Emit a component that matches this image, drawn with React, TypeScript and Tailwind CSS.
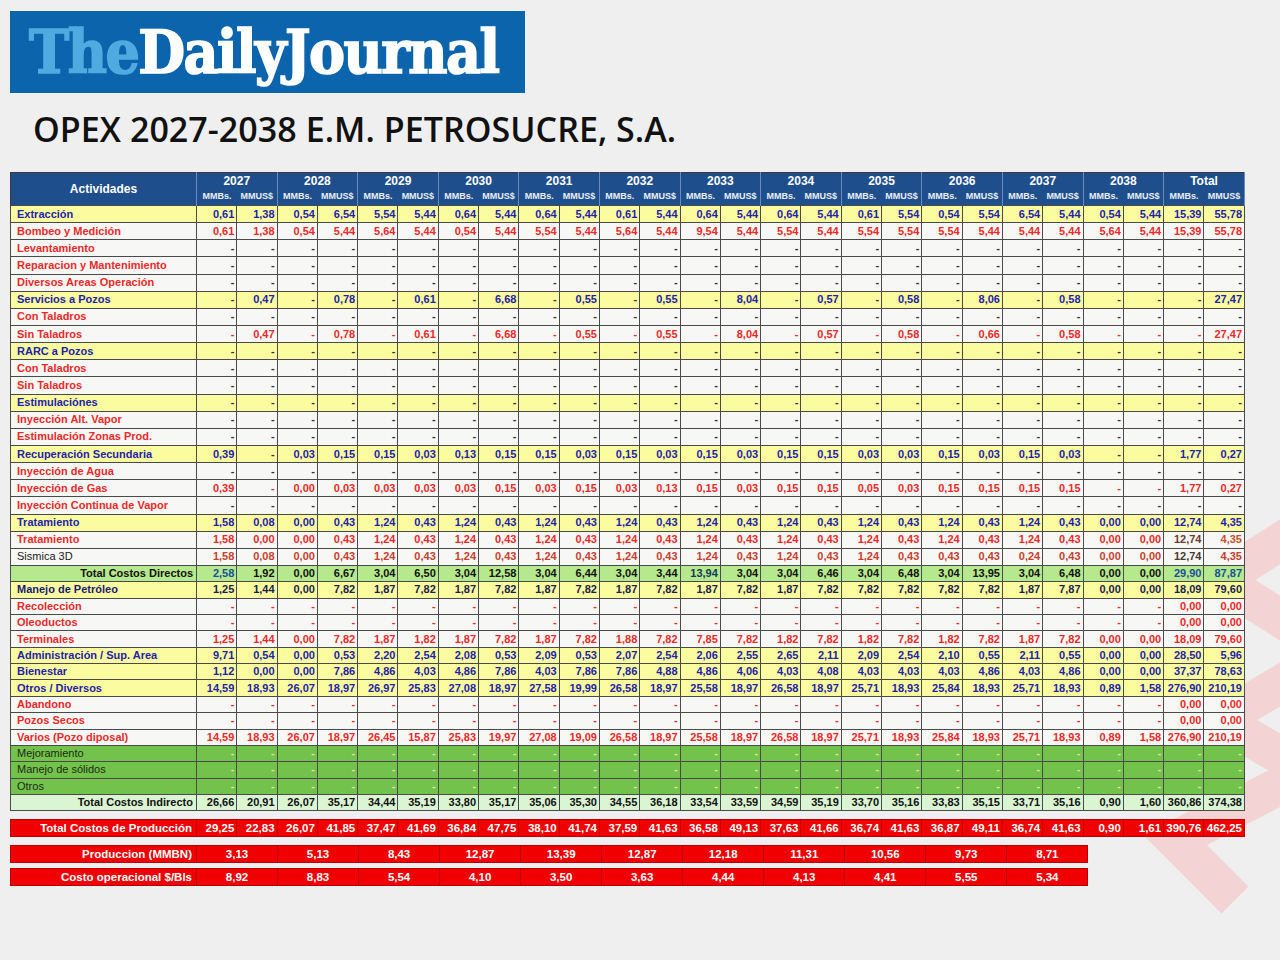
import React from 'react';

type Kind = 'blue' | 'red' | 'plain' | 'totalD' | 'navy' | 'green' | 'totalI';

interface Row {
  label: string;
  kind: Kind;
  values: string[];
}

const dash = (n: number) => Array(n).fill('-');
const v = (s: string) => s.split(' ');
const trat = Array(9).fill('1,24 0,43').join(' ');

const rows: Row[] = [
  { label: 'Extracción', kind: 'blue', values: v('0,61 1,38 0,54 6,54 5,54 5,44 0,64 5,44 0,64 5,44 0,61 5,44 0,64 5,44 0,64 5,44 0,61 5,54 0,54 5,54 6,54 5,44 0,54 5,44 15,39 55,78') },
  { label: 'Bombeo y Medición', kind: 'red', values: v('0,61 1,38 0,54 5,44 5,64 5,44 0,54 5,44 5,54 5,44 5,64 5,44 9,54 5,44 5,54 5,44 5,54 5,54 5,54 5,44 5,44 5,44 5,64 5,44 15,39 55,78') },
  { label: 'Levantamiento', kind: 'red', values: dash(26) },
  { label: 'Reparacion y Mantenimiento', kind: 'red', values: dash(26) },
  { label: 'Diversos Areas Operación', kind: 'red', values: dash(26) },
  { label: 'Servicios a Pozos', kind: 'blue', values: v('- 0,47 - 0,78 - 0,61 - 6,68 - 0,55 - 0,55 - 8,04 - 0,57 - 0,58 - 8,06 - 0,58 - - - 27,47') },
  { label: 'Con Taladros', kind: 'red', values: dash(26) },
  { label: 'Sin Taladros', kind: 'red', values: v('- 0,47 - 0,78 - 0,61 - 6,68 - 0,55 - 0,55 - 8,04 - 0,57 - 0,58 - 0,66 - 0,58 - - - 27,47') },
  { label: 'RARC a Pozos', kind: 'blue', values: dash(26) },
  { label: 'Con Taladros', kind: 'red', values: dash(26) },
  { label: 'Sin Taladros', kind: 'red', values: dash(26) },
  { label: 'Estimulaciónes', kind: 'blue', values: dash(26) },
  { label: 'Inyección Alt. Vapor', kind: 'red', values: dash(26) },
  { label: 'Estimulación Zonas Prod.', kind: 'red', values: dash(26) },
  { label: 'Recuperación Secundaria', kind: 'blue', values: v('0,39 - 0,03 0,15 0,15 0,03 0,13 0,15 0,15 0,03 0,15 0,03 0,15 0,03 0,15 0,15 0,03 0,03 0,15 0,03 0,15 0,03 - - 1,77 0,27') },
  { label: 'Inyección de Agua', kind: 'red', values: dash(26) },
  { label: 'Inyección de Gas', kind: 'red', values: v('0,39 - 0,00 0,03 0,03 0,03 0,03 0,15 0,03 0,15 0,03 0,13 0,15 0,03 0,15 0,15 0,05 0,03 0,15 0,15 0,15 0,15 - - 1,77 0,27') },
  { label: 'Inyección Continua de Vapor', kind: 'red', values: dash(26) },
  { label: 'Tratamiento', kind: 'blue', values: v(`1,58 0,08 0,00 0,43 ${trat} 0,00 0,00 12,74 4,35`) },
  { label: 'Tratamiento', kind: 'red', values: v(`1,58 0,00 0,00 0,43 ${trat} 0,00 0,00 12,74 4,35`) },
  { label: 'Sismica 3D', kind: 'plain', values: v('1,58 0,08 0,00 0,43 1,24 0,43 1,24 0,43 1,24 0,43 1,24 0,43 1,24 0,43 1,24 0,43 1,24 0,43 0,43 0,43 0,24 0,43 0,00 0,00 12,74 4,35') },
  { label: 'Total Costos Directos', kind: 'totalD', values: v('2,58 1,92 0,00 6,67 3,04 6,50 3,04 12,58 3,04 6,44 3,04 3,44 13,94 3,04 3,04 6,46 3,04 6,48 3,04 13,95 3,04 6,48 0,00 0,00 29,90 87,87') },
  { label: 'Manejo de Petróleo', kind: 'navy', values: v('1,25 1,44 0,00 7,82 1,87 7,82 1,87 7,82 1,87 7,82 1,87 7,82 1,87 7,82 1,87 7,82 7,82 7,82 7,82 7,82 1,87 7,87 0,00 0,00 18,09 79,60') },
  { label: 'Recolección', kind: 'red', values: [...dash(24), '0,00', '0,00'] },
  { label: 'Oleoductos', kind: 'red', values: [...dash(24), '0,00', '0,00'] },
  { label: 'Terminales', kind: 'red', values: v('1,25 1,44 0,00 7,82 1,87 1,82 1,87 7,82 1,87 7,82 1,88 7,82 7,85 7,82 1,82 7,82 1,82 7,82 1,82 7,82 1,87 7,82 0,00 0,00 18,09 79,60') },
  { label: 'Administración / Sup. Area', kind: 'blue', values: v('9,71 0,54 0,00 0,53 2,20 2,54 2,08 0,53 2,09 0,53 2,07 2,54 2,06 2,55 2,65 2,11 2,09 2,54 2,10 0,55 2,11 0,55 0,00 0,00 28,50 5,96') },
  { label: 'Bienestar', kind: 'blue', values: v('1,12 0,00 0,00 7,86 4,86 4,03 4,86 7,86 4,03 7,86 7,86 4,88 4,86 4,06 4,03 4,08 4,03 4,03 4,03 4,86 4,03 4,86 0,00 0,00 37,37 78,63') },
  { label: 'Otros / Diversos', kind: 'blue', values: v('14,59 18,93 26,07 18,97 26,97 25,83 27,08 18,97 27,58 19,99 26,58 18,97 25,58 18,97 26,58 18,97 25,71 18,93 25,84 18,93 25,71 18,93 0,89 1,58 276,90 210,19') },
  { label: 'Abandono', kind: 'red', values: [...dash(24), '0,00', '0,00'] },
  { label: 'Pozos Secos', kind: 'red', values: [...dash(24), '0,00', '0,00'] },
  { label: 'Varios (Pozo diposal)', kind: 'red', values: v('14,59 18,93 26,07 18,97 26,45 15,87 25,83 19,97 27,08 19,09 26,58 18,97 25,58 18,97 26,58 18,97 25,71 18,93 25,84 18,93 25,71 18,93 0,89 1,58 276,90 210,19') },
  { label: 'Mejoramiento', kind: 'green', values: dash(26) },
  { label: 'Manejo de sólidos', kind: 'green', values: dash(26) },
  { label: 'Otros', kind: 'green', values: dash(26) },
  { label: 'Total Costos Indirecto', kind: 'totalI', values: v('26,66 20,91 26,07 35,17 34,44 35,19 33,80 35,17 35,06 35,30 34,55 36,18 33,54 33,59 34,59 35,19 33,70 35,16 33,83 35,15 33,71 35,16 0,90 1,60 360,86 374,38') },
];

const years = ['2027', '2028', '2029', '2030', '2031', '2032', '2033', '2034', '2035', '2036', '2037', '2038', 'Total'];
const totalProd = v('29,25 22,83 26,07 41,85 37,47 41,69 36,84 47,75 38,10 41,74 37,59 41,63 36,58 49,13 37,63 41,66 36,74 41,63 36,87 49,11 36,74 41,63 0,90 1,61 390,76 462,25');
const produccion = v('3,13 5,13 8,43 12,87 13,39 12,87 12,18 11,31 10,56 9,73 8,71');
const costo = v('8,92 8,83 5,54 4,10 3,50 3,63 4,44 4,13 4,41 5,55 5,34');

const rowBg: Record<Kind, string> = {
  blue: 'bg-[#fbfba0]',
  red: 'bg-[#f7f7f5]',
  plain: 'bg-[#f7f7f5]',
  totalD: 'bg-[#b6e88e]',
  navy: 'bg-[#fbfba0]',
  green: 'bg-[#72c24c]',
  totalI: 'bg-[#daf5d2]',
};

const labelCls: Record<Kind, string> = {
  blue: 'text-[#1f24a6] font-bold text-left pl-[6px]',
  red: 'text-[#ec2a2a] font-bold text-left pl-[6px]',
  plain: 'text-[#222] font-normal text-left pl-[6px]',
  totalD: 'text-[#111] font-bold text-right pr-[3px]',
  navy: 'text-[#1a2070] font-bold text-left pl-[6px]',
  green: 'text-[#1e2a14] font-normal text-left pl-[6px]',
  totalI: 'text-[#111] font-bold text-right pr-[3px]',
};

function cellColor(row: Row, idx: number, val: string) {
  if (row.kind === 'green') return 'text-[#dbe8a6] text-center';
  if (val === '-') {
    const hasNum = row.values.some((x) => x !== '-');
    if (row.kind === 'red' && hasNum) return 'text-[#ec2a2a]';
    return 'text-[#333]';
  }
  switch (row.kind) {
    case 'blue':
      return 'text-[#1f24a6]';
    case 'red':
      if (row.label === 'Tratamiento' && idx === 24) return 'text-[#6b3a30]';
      if (row.label === 'Tratamiento' && idx === 25) return 'text-[#c8502a]';
      return 'text-[#ec2a2a]';
    case 'plain':
      if (idx === 24) return 'text-[#4a3a34]';
      return 'text-[#c8402e]';
    case 'totalD':
      if (idx === 0 || idx === 24 || idx === 25) return 'text-[#1a4f9a]';
      if (idx === 12) return 'text-[#123a5a]';
      return 'text-[#111]';
    case 'navy':
      return 'text-[#1c1e4e]';
    default:
      return 'text-[#111]';
  }
}

function ColGroup() {
  return (
    <colgroup>
      <col className="w-[186px]" />
      {Array.from({ length: 26 }).map((_, i) => (
        <col key={i} />
      ))}
    </colgroup>
  );
}

function Watermark() {
  return (
    <svg
      className="absolute left-0 top-0 pointer-events-none"
      width="1280"
      height="960"
      viewBox="0 0 1280 960"
    >
      <g fill="none" stroke="#f3d3d3" strokeWidth="38" strokeLinejoin="miter">
        <polyline points="1330,510 1220,580 1330,650" />
        <polyline points="1330,655 1220,720 1330,785" />
        <polyline points="1320,765 1175,840 1235,900" />
      </g>
    </svg>
  );
}

export default function App() {
  return (
    <div className="relative min-h-[960px] w-[1280px] overflow-hidden bg-[#efefef] font-['Liberation_Sans',Arial,sans-serif]">
      <Watermark />
      <div className="relative pl-[10px] pt-[11px]">
        {/* Logo */}
        <div className="flex h-[82px] w-[515px] items-center bg-[#0c64ad] pl-[19px]">
          <span className="font-['DejaVu_Serif_Condensed','DejaVu_Serif',serif] text-[60px] font-bold leading-none tracking-[-1.5px] text-white [-webkit-text-stroke:1.6px_white]">
            <span className="text-[#4fabdf] [-webkit-text-stroke:1.6px_#4fabdf]">The</span>DailyJournal
          </span>
        </div>

        {/* Title */}
        <h1 className="mt-[15px] pl-[23px] font-['Open_Sans',sans-serif] text-[34px] font-semibold leading-[42px] tracking-[0.05px] text-[#111]">
          OPEX 2027-2038 E.M. PETROSUCRE, S.A.
        </h1>

        {/* Main table */}
        <table className="mt-[22px] w-[1235px] table-fixed border-collapse border border-[#3a3a3a]">
          <ColGroup />
          <thead>
            <tr className="h-[16px] bg-[#1f4e8c] text-white">
              <th rowSpan={2} className="border-r border-[#6a8ab8] text-[12px] font-bold">
                Actividades
              </th>
              {years.map((y) => (
                <th key={y} colSpan={2} className="border-r border-[#6a8ab8] text-[12px] font-bold leading-none">
                  {y}
                </th>
              ))}
            </tr>
            <tr className="h-[17px] bg-[#1f4e8c] text-[#e8eef8]">
              {years.map((y) => (
                <React.Fragment key={y}>
                  <th className="whitespace-nowrap text-[9px] font-bold leading-none">MMBs.</th>
                  <th className="whitespace-nowrap border-r border-[#6a8ab8] text-[9px] font-bold leading-none">MMUS$</th>
                </React.Fragment>
              ))}
            </tr>
          </thead>
          <tbody>
            {rows.map((row, ri) => (
              <tr key={ri} className={`${rowBg[row.kind]} ${ri < 21 ? 'h-[17.15px]' : 'h-[16.36px]'}`}>
                <td
                  className={`whitespace-nowrap border border-[#4a4a4a] p-0 text-[11px] leading-none ${labelCls[row.kind]}`}
                >
                  {row.label}
                </td>
                {row.values.map((val, ci) => (
                  <td
                    key={ci}
                    className={`whitespace-nowrap border border-[#4a4a4a] p-0 pr-[2px] text-right text-[11px] font-bold leading-none ${cellColor(row, ci, val)}`}
                  >
                    {val}
                  </td>
                ))}
              </tr>
            ))}
          </tbody>
        </table>

        {/* Total Costos de Produccion */}
        <table className="mt-[8px] w-[1235px] table-fixed border-collapse">
          <ColGroup />
          <tbody>
            <tr className="h-[17px] bg-[#f00000] text-white">
              <td className="whitespace-nowrap border border-[#c00000] p-0 pr-[4px] text-right text-[11.5px] font-bold leading-none">
                Total Costos de Producción
              </td>
              {totalProd.map((val, i) => (
                <td key={i} className="whitespace-nowrap border border-[#c00000] p-0 pr-[2px] text-right text-[11.5px] font-bold leading-none">
                  {val}
                </td>
              ))}
            </tr>
          </tbody>
        </table>

        {/* Produccion / Costo */}
        <table className="mt-[8px] w-[1240px] table-fixed border-collapse">
          <ColGroup />
          <tbody>
            <tr className="h-[17px] text-white">
              <td className="whitespace-nowrap border border-[#b80000] bg-[#f00000] p-0 pr-[4px] text-right text-[11.5px] font-bold leading-none">
                Produccion (MMBN)
              </td>
              {produccion.map((val, i) => (
                <td key={i} colSpan={2} className="border border-[#b80000] bg-[#f00000] p-0 text-center text-[11.5px] font-bold leading-none">
                  {val}
                </td>
              ))}
            </tr>
            <tr className="h-[6px]">
              <td colSpan={27} className="p-0" />
            </tr>
            <tr className="h-[17px] text-white">
              <td className="whitespace-nowrap border border-[#b80000] bg-[#f00000] p-0 pr-[4px] text-right text-[11.5px] font-bold leading-none">
                Costo operacional $/Bls
              </td>
              {costo.map((val, i) => (
                <td key={i} colSpan={2} className="border border-[#b80000] bg-[#f00000] p-0 text-center text-[11.5px] font-bold leading-none">
                  {val}
                </td>
              ))}
            </tr>
          </tbody>
        </table>
      </div>
    </div>
  );
}
